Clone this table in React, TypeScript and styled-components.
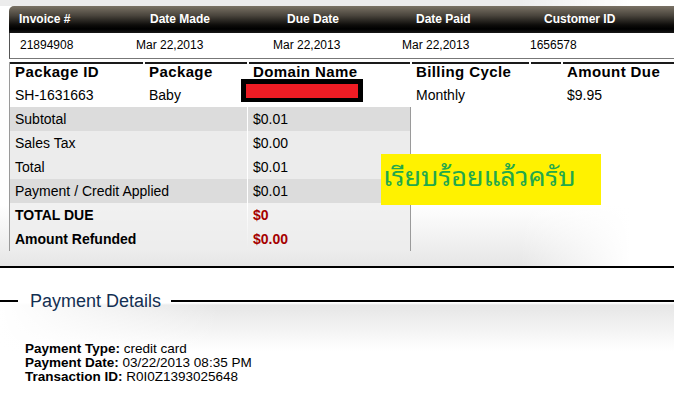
import React from "react";
import styled, { createGlobalStyle } from "styled-components";

const GlobalStyle = createGlobalStyle`
  html, body { margin: 0; padding: 0; background: #fff; }
  body { font-family: "Liberation Sans", Arial, sans-serif; color: #000; width: 674px; overflow: hidden; }
`;

const Page = styled.div`
  width: 674px;
`;

const TopSection = styled.section`
  position: relative;
  padding: 6px 0 15px;
  border-bottom: 2px solid #000;
  background:
    linear-gradient(to right, rgba(255,255,255,0) 0, rgba(255,255,255,0) 520px, #fff 630px),
    linear-gradient(to bottom, #ececec 0, #ececec 6px, #fff 6px, #fff 205px, #e6e6e6 100%);
`;

const InvoiceHeader = styled.div`
  margin-left: 9px;
  height: 27px;
  border-radius: 5px 0 0 0;
  background: linear-gradient(to bottom, #7a7265 0%, #4a453d 35%, #0e0d0b 70%, #000 85%, #161616 100%);
  display: grid;
  grid-template-columns: 131px 137px 129px 128px 1fr;
  padding-left: 10px;
  align-items: center;
`;

const HeadLabel = styled.div`
  color: #fff;
  font-weight: bold;
  font-size: 12px;
  padding-bottom: 1px;
`;

const InvoiceData = styled.div`
  margin-left: 9px;
  border-left: 1px solid #555;
  border-bottom: 1px solid #777;
  background: #fff;
  display: grid;
  grid-template-columns: 116px 137px 129px 128px 1fr;
  padding-left: 10px;
  align-items: center;
  font-size: 12px;
  padding-bottom: 1px;
  box-sizing: border-box;
  height: 26px;
`;

const PackageTable = styled.div`
  margin: 3px 0 0 9px;
  border-left: 1px solid #9a9a9a;
`;

const PackageRow = styled.div<{ $head?: boolean }>`
  display: grid;
  grid-template-columns: 133px 102px 161px 117px 30px 1fr;
  column-gap: 2px;
  height: ${(p) => (p.$head ? "20px" : "25px")};
  align-items: start;
  background: #fff;
`;

const PackHead = styled.div<{ $first?: boolean }>`
  border-top: 2px solid #1a1a1a;
  height: 18px;
  line-height: 16px;
  padding-left: ${(p) => (p.$first ? "5px" : "4px")};
  font-size: 15px;
  font-weight: bold;
  letter-spacing: 0.4px;
  white-space: nowrap;
`;

const PackCell = styled.div<{ $first?: boolean }>`
  position: relative;
  padding-left: ${(p) => (p.$first ? "5px" : "4px")};
  font-size: 14px;
  height: 25px;
  line-height: 26px;
`;

const Redaction = styled.div`
  position: absolute;
  left: -8px;
  top: -3px;
  width: 112px;
  height: 14px;
  background: #ee1c24;
  border: 5px solid #000;
  border-bottom-width: 4px;
`;

const Summary = styled.div`
  width: 400px;
  border-right: 1px solid #9a9a9a;
`;

const SummaryRow = styled.div<{ $tone: "dark" | "light" | "plain" }>`
  display: grid;
  grid-template-columns: 237px 162px;
  column-gap: 1px;
  height: 23px;
  border-bottom: 1px solid ${(p) => (p.$tone === "plain" ? "transparent" : "#fff")};
  background: ${(p) => (p.$tone === "plain" ? "transparent" : "#fff")};
`;

const SumCell = styled.div<{ $tone: "dark" | "light" | "plain"; $bold?: boolean; $red?: boolean }>`
  padding-left: 5px;
  line-height: 24px;
  font-size: 14px;
  font-weight: ${(p) => (p.$bold ? "bold" : "normal")};
  color: ${(p) => (p.$red ? "#a50000" : "#000")};
  background: ${(p) =>
    p.$tone === "dark" ? "#dcdcdc" : p.$tone === "light" ? "#ececec" : "rgba(236,236,236,0.75)"};
`;

const Note = styled.div`
  position: absolute;
  left: 381px;
  top: 154px;
  width: 220px;
  height: 51px;
  background: #fff200;
  color: #22a84c;
  font-family: "Noto Sans Thai Looped", Tahoma, "Noto Sans Thai", "Noto Sans", sans-serif;
  font-size: 27px;
  line-height: 39px;
  padding-left: 2px;
  box-sizing: border-box;
  white-space: nowrap;
`;

const PaymentSection = styled.section`
  margin-top: 23px;
  background:
    linear-gradient(to right, #fff 0, rgba(255,255,255,0) 220px),
    linear-gradient(to bottom, #fff 0, #fff 12px, #e6e6e6 14px, #fff 60px, #fff 100%);
`;

const LegendRow = styled.div`
  display: flex;
  align-items: center;
  height: 20px;
`;

const LegendLine = styled.div<{ $grow?: boolean }>`
  height: 2px;
  background: #000;
  width: ${(p) => (p.$grow ? "auto" : "18px")};
  flex: ${(p) => (p.$grow ? 1 : "none")};
`;

const LegendTitle = styled.div`
  padding: 0 10px 0 12px;
  font-size: 18px;
  color: #132f52;
  line-height: 20px;
`;

const PaymentInfo = styled.div`
  padding: 31px 0 20px 25px;
  font-size: 13.5px;
  line-height: 14px;
`;

const InfoLine = styled.div`
  height: 14px;
`;

const InfoLabel = styled.b`
  font-weight: bold;
`;

const headers = ["Invoice #", "Date Made", "Due Date", "Date Paid", "Customer ID"];
const values = ["21894908", "Mar 22,2013", "Mar 22,2013", "Mar 22,2013", "1656578"];

type Tone = "dark" | "light" | "plain";
const summary: { label: string; value: string; tone: Tone; bold?: boolean; red?: boolean }[] = [
  { label: "Subtotal", value: "$0.01", tone: "dark" },
  { label: "Sales Tax", value: "$0.00", tone: "light" },
  { label: "Total", value: "$0.01", tone: "light" },
  { label: "Payment / Credit Applied", value: "$0.01", tone: "dark" },
  { label: "TOTAL DUE", value: "$0", tone: "plain", bold: true, red: true },
  { label: "Amount Refunded", value: "$0.00", tone: "plain", bold: true, red: true },
];

export default function App() {
  return (
    <Page>
      <GlobalStyle />
      <TopSection>
        <InvoiceHeader>
          {headers.map((h) => (
            <HeadLabel key={h}>{h}</HeadLabel>
          ))}
        </InvoiceHeader>
        <InvoiceData>
          {values.map((v, i) => (
            <div key={i}>{v}</div>
          ))}
        </InvoiceData>
        <PackageTable>
          <PackageRow $head>
            <PackHead $first>Package ID</PackHead>
            <PackHead>Package</PackHead>
            <PackHead>Domain Name</PackHead>
            <PackHead>Billing Cycle</PackHead>
            <PackHead></PackHead>
            <PackHead>Amount Due</PackHead>
          </PackageRow>
          <PackageRow>
            <PackCell $first>SH-1631663</PackCell>
            <PackCell>Baby</PackCell>
            <PackCell>
              <Redaction />
            </PackCell>
            <PackCell>Monthly</PackCell>
            <PackCell></PackCell>
            <PackCell>$9.95</PackCell>
          </PackageRow>
          <Summary>
            {summary.map((r) => (
              <SummaryRow key={r.label} $tone={r.tone}>
                <SumCell $tone={r.tone} $bold={r.bold}>
                  {r.label}
                </SumCell>
                <SumCell $tone={r.tone} $bold={r.bold} $red={r.red}>
                  {r.value}
                </SumCell>
              </SummaryRow>
            ))}
          </Summary>
        </PackageTable>
        <Note>เรียบร้อยแล้วครับ</Note>
      </TopSection>
      <PaymentSection>
        <LegendRow>
          <LegendLine />
          <LegendTitle>Payment Details</LegendTitle>
          <LegendLine $grow />
        </LegendRow>
        <PaymentInfo>
          <InfoLine>
            <InfoLabel>Payment Type:</InfoLabel> credit card
          </InfoLine>
          <InfoLine>
            <InfoLabel>Payment Date:</InfoLabel> 03/22/2013 08:35 PM
          </InfoLine>
          <InfoLine>
            <InfoLabel>Transaction ID:</InfoLabel> R0I0Z1393025648
          </InfoLine>
        </PaymentInfo>
      </PaymentSection>
    </Page>
  );
}
